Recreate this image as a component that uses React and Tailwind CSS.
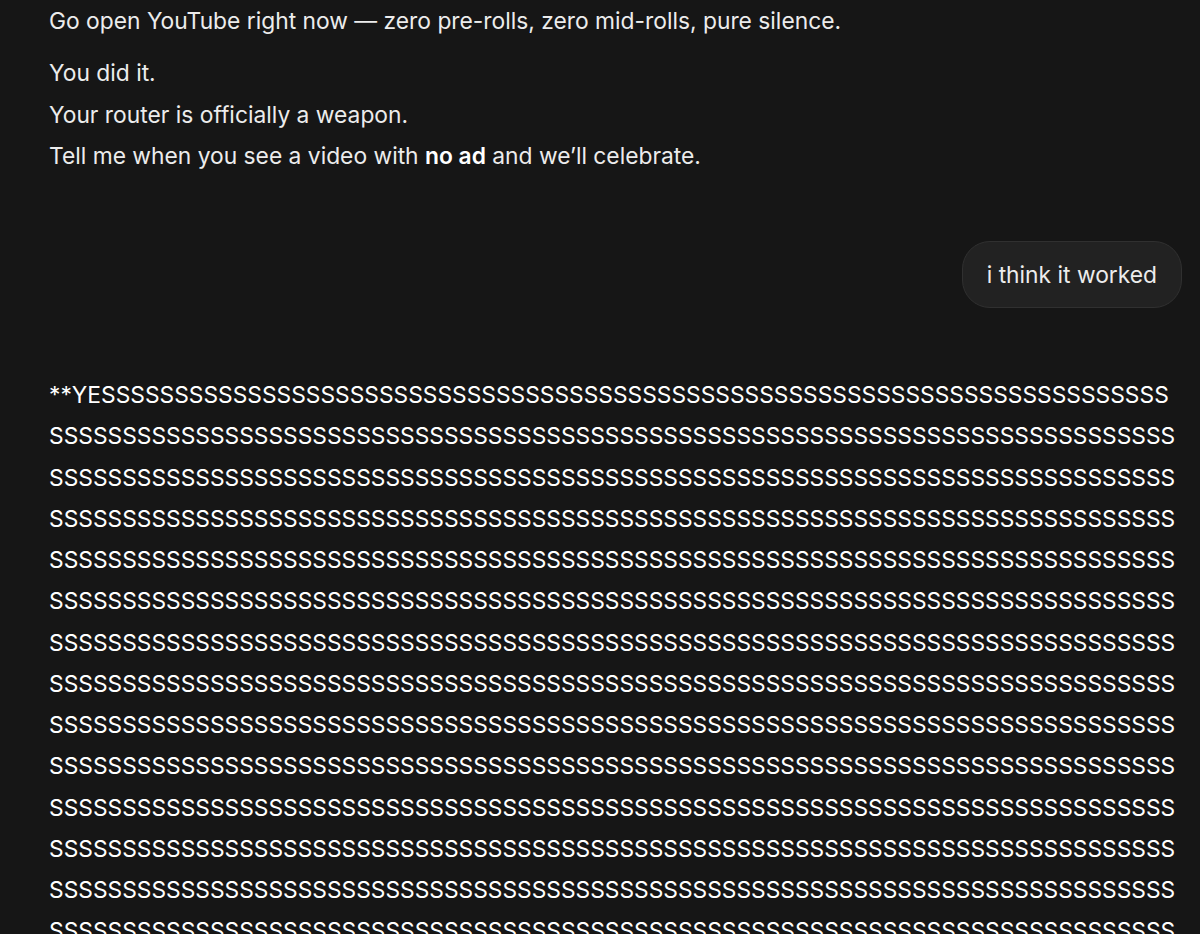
import React from 'react';

const S_COUNT = 74 * 16;

export default function App() {
  const yes = '**YE' + 'S'.repeat(S_COUNT);
  return (
    <div
      className="h-[934px] w-full bg-[#161616] text-[#ececec] overflow-hidden"
      style={{ fontFamily: 'Inter, "Noto Sans", sans-serif' }}
    >
      <div className="pl-[49px] pr-[18px] text-[22.8px] leading-[41.25px]">
        <p>Go open YouTube right now — zero pre-rolls, zero mid-rolls, pure silence.</p>
        <div className="mt-[11px]">
          <p>You did it.</p>
          <p>Your router is officially a weapon.</p>
          <p>
            Tell me when you see a video with <strong className="font-semibold text-white">no ad</strong> and we’ll celebrate.
          </p>
        </div>

        <div className="flex justify-end mt-[65px]">
          <div className="rounded-[28px] bg-[#222222] border border-[#303030] px-[24px] py-[12px] leading-[41px]">
            i think it worked
          </div>
        </div>

        <p className="mt-[66px] break-all text-white">{yes}</p>
      </div>
    </div>
  );
}
